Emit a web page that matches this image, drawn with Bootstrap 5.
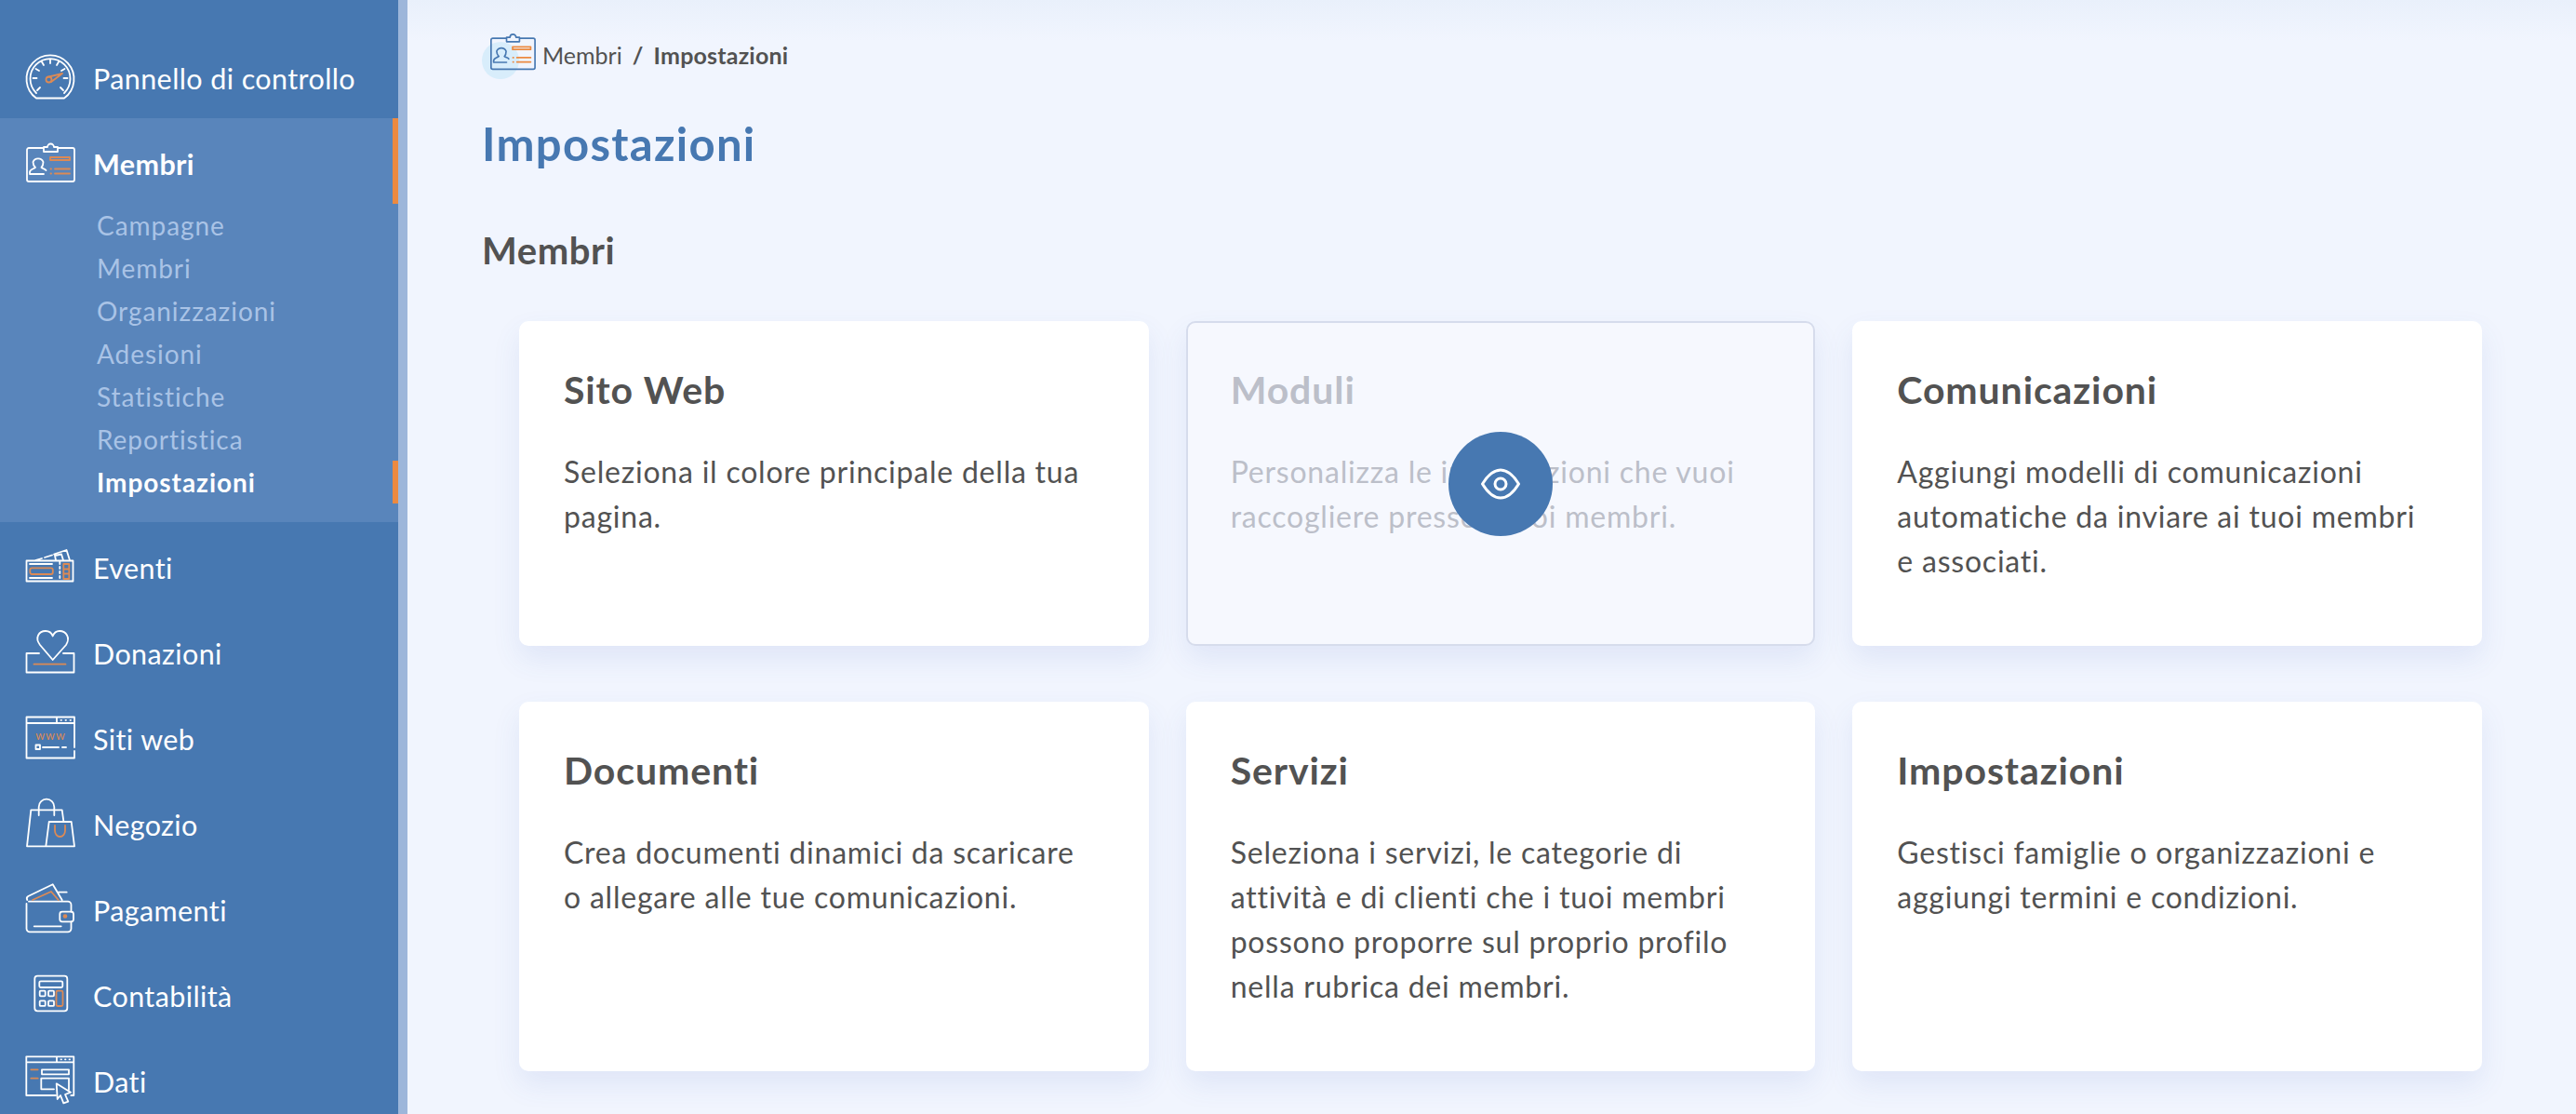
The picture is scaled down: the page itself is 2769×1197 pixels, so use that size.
<!doctype html>
<html lang="it">
<head>
<meta charset="utf-8">
<title>Impostazioni</title>
<link href="https://cdn.jsdelivr.net/npm/bootstrap@5.3.0/dist/css/bootstrap.min.css" rel="stylesheet">
<style>
html,body{height:100%;overflow:hidden}
body{font-family:"Lato","Open Sans",sans-serif;background:#f1f5fe;color:#525252}
.shell{height:100vh}
.side{width:438px;flex:none;background:#4778b1;border-right:10px solid #9db6da;padding-top:35px;overflow:hidden}
.side .nav-link{display:flex;flex:none;align-items:center;height:92px;padding:6px 0 0 27px;gap:19px;color:#fff;font-size:30.5px;letter-spacing:.4px;line-height:1}
.side .nav-link svg{flex:none;width:54px;height:54px;overflow:visible;margin-top:-4px}
.side .nav-link.here{font-weight:700;border-right:6px solid #ec8a40}
.grp{background:#5985bb;padding-bottom:20px;flex:none}
.side .sub-link{height:46px;padding:0 0 1px 104px;gap:0;font-size:28px;color:#a9c3e6;letter-spacing:.95px}
.side .sub-link.here{color:#fff;letter-spacing:.95px}
.ln{fill:none;stroke:#fff;stroke-width:1.8;stroke-linecap:round;stroke-linejoin:round}
.ac{fill:none;stroke:#dc8a55;stroke-width:1.8;stroke-linecap:round;stroke-linejoin:round}
.content{flex:1;min-width:0;padding:0 81px 0 80px;background:linear-gradient(#e9f0fb,#f1f5fe 44px)}
.crumbs{height:80px;padding:40px 0 0 10px;font-size:25px;gap:8px}
.crumb-ic{position:relative;width:47px;height:45px;flex:none}
.crumb-ic::before{content:"";position:absolute;left:-10px;top:7.5px;width:40px;height:40px;border-radius:50%;background:#d8edfb}
.crumb-ic svg{position:absolute;left:-2px;top:-8px;width:50px;height:50px;overflow:visible}
.crumb-ic .ln{stroke:#4778b1}
.crumb-ic .ac{stroke:#ec8a40}
.breadcrumb{margin:0;--bs-breadcrumb-divider-color:#525252;--bs-breadcrumb-item-padding-x:11px;--bs-breadcrumb-item-active-color:#525252;letter-spacing:0}
.breadcrumb-item.active{font-weight:700;letter-spacing:.2px}
.page-h{color:#4778b1;font-size:49px;font-weight:700;line-height:60px;margin:44px 0 0;letter-spacing:1.3px}
.sec-h{font-size:40px;font-weight:700;line-height:50px;margin:60px 0 0;letter-spacing:.55px}
.tiles{padding:0 20px 0 40px;margin-top:50.5px}
.tiles .row{--bs-gutter-x:40px;--bs-gutter-y:60px}
.tile{height:100%;border:0;border-radius:10px;background:#fff;box-shadow:0 14px 30px rgba(70,100,190,.1);padding:48px 58px 67px 48px}
.tile h3{font-size:41px;font-weight:700;line-height:52px;margin:0 0 38px;letter-spacing:.9px;color:#525252}
.tile p{font-size:32px;line-height:48px;margin:0;letter-spacing:.78px;color:#525252}
.tile.dim{background:#f6f8fe;border:2px solid #d6dcec;padding:46px 56px 65px 46px}
.tile.dim h3,.tile.dim p{color:#bcbfc9}
.peek{position:absolute;left:50%;top:50%;width:112px;height:112px;margin:-55px 0 0 -56px;border-radius:50%;background:#4778b1}
</style>
</head>
<body>
<div class="shell d-flex">
<nav class="side nav flex-column flex-nowrap">
  <a class="nav-link" href="#"><svg viewBox="0 0 54 54"><path class="ln" d="M12 50.5h30M12 50.5A25.5 25.5 0 1 1 42 50.5"/><path class="ln" d="M12 45A21.5 21.5 0 1 1 42 45M8.5 29h4M11.500 19l3.500 2M18 11.500l2 3.500M27 9v4M36 11.500l-2 3.500M42.500 19l-3.500 2M45.500 29h-4M13 42l3-3M41 42l-3-3"/><circle class="ac" cx="25.500" cy="30.500" r="3"/><path class="ac" d="M24 27.800L40 24 28 33"/></svg>Pannello di controllo</a>
  <div class="grp">
    <a class="nav-link here" href="#"><svg viewBox="0 0 54 54"><path class="ln" d="M20 12H4a2 2 0 0 0-2 2v32a2 2 0 0 0 2 2h47a2 2 0 0 0 2-2V14a2 2 0 0 0-2-2H35M20 16h15v-5h-4a3.500 3.500 0 0 0-7 0h-4zM5 40v-2c0-3 3-3 6-5-2-2-2.500-3.500-2.500-6a6 6 0 0 1 11 0c0 2.500 0 4-2 6 2 1.500 4 1.500 5 3M5 40h15"/><path class="ac" d="M27 22h21v3H27zM32 34.500h16M32 39.500h16M27.500 34.500h.5M27.500 39.500h.5"/></svg>Membri</a>
    <a class="nav-link sub-link" href="#">Campagne</a>
    <a class="nav-link sub-link" href="#">Membri</a>
    <a class="nav-link sub-link" href="#">Organizzazioni</a>
    <a class="nav-link sub-link" href="#">Adesioni</a>
    <a class="nav-link sub-link" href="#">Statistiche</a>
    <a class="nav-link sub-link" href="#">Reportistica</a>
    <a class="nav-link sub-link here" href="#">Impostazioni</a>
  </div>
  <a class="nav-link" href="#"><svg viewBox="0 0 54 54"><path class="ln" d="M1.500 21.500h50v22h-50zM37.300 23v2M37.300 28v2M37.300 33v2M37.300 38v2M5 25h24M5 40h24M11 21l7-2M21 18l8-2.500M31 14.500L44.500 10l3.500 11M33 21l-1-5 7-1.500 2 6.500"/><rect class="ac" x="5.300" y="29.300" width="24.500" height="6.700" rx="2"/><path class="ac" d="M41.300 25h6v16h-6zM41.300 30.500h6M41.300 35.500h6"/></svg>Eventi</a>
  <a class="nav-link" href="#"><svg viewBox="0 0 54 54"><path class="ln" d="M15 29H1.500v20.500h51V29H41M29.700 36L16 20C10 12 15 5 22 5c4 0 6.500 2 7.700 5.500C31 7 33.500 5 37 5c7 0 12 7 7 15z"/><path class="ac" d="M9.500 40.700h34"/></svg>Donazioni</a>
  <a class="nav-link" href="#"><svg viewBox="0 0 54 54"><path class="ln" d="M53 42v7.500H1.500V5.500H53V38M1.500 12H53M34 5.500V12M38.500 8.800h.5M43.500 8.800h.5M48.500 8.800h.5M19 38h17M40 38h4"/><rect class="ln" x="11.500" y="35.500" width="4.500" height="4.500"/><text x="27.500" y="30" text-anchor="middle" font-size="12.500" letter-spacing="1" fill="#dc8a55" font-family="Lato, sans-serif">www</text></svg>Siti web</a>
  <a class="nav-link" href="#"><svg viewBox="0 0 54 54"><path class="ln" d="M22.300 52.300H2L6.300 13.300H39.700L41.300 25M14.700 19V10a8.300 8.300 0 0 1 16.600 0v9M25.700 26H49.700L53 52.300H22.300zM44 52.300h9"/><path class="ac" d="M32 30v5.500a5.500 6.500 0 0 0 11 0V30"/></svg>Negozio</a>
  <a class="nav-link" href="#"><svg viewBox="0 0 54 54"><path class="ln" d="M4 19.700h42a3.500 3.500 0 0 1 3.500 3.500v7.500M49.500 41.300v7.500a3.500 3.500 0 0 1-3.500 3.500H5a3.500 3.500 0 0 1-3.500-3.500V22M2.300 18a3 3 0 0 1 1-4L29.700 1.300 39.700 18M36 9.700h8.700M9.700 46.300h29"/><rect class="ln" x="37.300" y="30.700" width="14.700" height="10.600" rx="2.500"/><path class="ac" d="M8 18l20-9 7.700 9"/><circle cx="43" cy="35.500" r="2.300" fill="#dc8a55"/></svg>Pagamenti</a>
  <a class="nav-link" href="#"><svg viewBox="0 0 54 54"><rect class="ln" x="10.300" y="7.700" width="35" height="37.600" rx="3"/><rect class="ln" x="15.300" y="13.300" width="25" height="6.700" rx="1.500"/><rect class="ln" x="15.700" y="23.700" width="6" height="5.600" rx="1"/><rect class="ln" x="25" y="23.700" width="6" height="5.600" rx="1"/><rect class="ln" x="15.700" y="34.300" width="6" height="5.600" rx="1"/><rect class="ln" x="25" y="34.300" width="6" height="5.600" rx="1"/><rect class="ac" x="33.500" y="23.700" width="7" height="16.300" rx="1.500"/></svg>Contabilità</a>
  <a class="nav-link" href="#"><svg viewBox="0 0 54 54"><path class="ln" d="M33 44H1.300V2.300h51V44h-3M1.300 8.300h51M34 2.300v6M38.500 5.300h.5M43 5.300h.5M47.500 5.300h.5M18 16.300h29v5H18zM31 37.300H17.300V25.700H47V38"/><path class="ac" d="M6.300 16.300h7.400M6.300 25.700h7.400"/><path class="ln" d="M33.700 31.300L49 40.700l-6 2.300 3.300 7.700-5 1.600-3.300-8.300-3.300 4z"/></svg>Dati</a>
</nav>
<main class="content">
  <div class="crumbs d-flex align-items-center">
    <span class="crumb-ic"><svg viewBox="0 0 54 54"><path class="ln" d="M20 12H4a2 2 0 0 0-2 2v32a2 2 0 0 0 2 2h47a2 2 0 0 0 2-2V14a2 2 0 0 0-2-2H35M20 16h15v-5h-4a3.500 3.500 0 0 0-7 0h-4zM5 40v-2c0-3 3-3 6-5-2-2-2.500-3.500-2.500-6a6 6 0 0 1 11 0c0 2.500 0 4-2 6 2 1.500 4 1.500 5 3M5 40h15"/><path class="ac" d="M27 22h21v3H27zM32 34.500h16M32 39.500h16M27.500 34.500h.5M27.500 39.500h.5"/></svg></span>
    <ol class="breadcrumb">
      <li class="breadcrumb-item">Membri</li>
      <li class="breadcrumb-item active">Impostazioni</li>
    </ol>
  </div>
  <h1 class="page-h">Impostazioni</h1>
  <h2 class="sec-h">Membri</h2>
  <div class="tiles">
    <div class="row">
      <div class="col-4"><div class="card tile"><h3>Sito Web</h3><p>Seleziona il colore principale della tua pagina.</p></div></div>
      <div class="col-4"><div class="card tile dim position-relative"><h3>Moduli</h3><p>Personalizza le informazioni che vuoi raccogliere presso i tuoi membri.</p>
        <div class="peek d-flex align-items-center justify-content-center"><svg width="44" height="34" viewBox="0 0 44 34" aria-hidden="true"><path d="M2.500 17C8 8 14 2 22 2s14 6 19.500 15C36 26 30 32 22 32S8 26 2.500 17z" fill="none" stroke="#fff" stroke-width="3" stroke-linejoin="round"/><circle cx="22" cy="17" r="6" fill="none" stroke="#fff" stroke-width="3"/></svg></div></div></div>
      <div class="col-4"><div class="card tile"><h3>Comunicazioni</h3><p>Aggiungi modelli di comunicazioni automatiche da inviare ai tuoi membri e associati.</p></div></div>
      <div class="col-4"><div class="card tile"><h3>Documenti</h3><p>Crea documenti dinamici da scaricare o allegare alle tue comunicazioni.</p></div></div>
      <div class="col-4"><div class="card tile"><h3>Servizi</h3><p>Seleziona i servizi, le categorie di attività e di clienti che i tuoi membri possono proporre sul proprio profilo nella rubrica dei membri.</p></div></div>
      <div class="col-4"><div class="card tile"><h3>Impostazioni</h3><p>Gestisci famiglie o organizzazioni e aggiungi termini e condizioni.</p></div></div>
    </div>
  </div>
</main>
</div>
<script src="https://cdn.jsdelivr.net/npm/bootstrap@5.3.0/dist/js/bootstrap.bundle.min.js"></script>
</body>
</html>
